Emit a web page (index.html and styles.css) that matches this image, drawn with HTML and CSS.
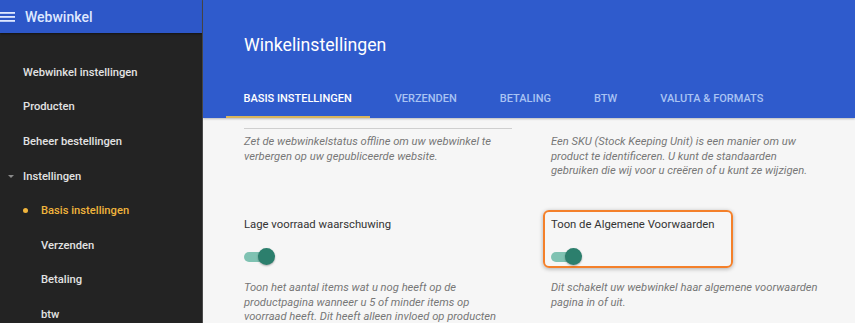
FILE: index.html
```html
<!DOCTYPE html>
<html lang="nl">
<head>
<meta charset="utf-8">
<title>Winkelinstellingen</title>
<link rel="stylesheet" href="styles.css">
</head>
<body>
<div class="app">
  <aside class="sidebar">
    <div class="side-head">
      <svg class="burger" width="15" height="12" viewBox="0 0 15 12"><rect x="0" y="1" width="15" height="1.8" fill="#dfe8ff"/><rect x="0" y="5" width="15" height="1.8" fill="#dfe8ff"/><rect x="0" y="9" width="15" height="1.8" fill="#dfe8ff"/></svg>
      <span class="brand">Webwinkel</span>
    </div>
    <nav class="nav">
      <div class="nav-item">Webwinkel instellingen</div>
      <div class="nav-item">Producten</div>
      <div class="nav-item">Beheer bestellingen</div>
      <div class="nav-item parent"><span class="caret"></span>Instellingen</div>
      <div class="nav-item sub active"><span class="dot"></span>Basis instellingen</div>
      <div class="nav-item sub">Verzenden</div>
      <div class="nav-item sub">Betaling</div>
      <div class="nav-item sub">btw</div>
    </nav>
  </aside>
  <main class="main">
    <header class="head">
      <h1 class="title">Winkelinstellingen</h1>
      <div class="tabs">
        <div class="tab active">BASIS INSTELLINGEN</div>
        <div class="tab">VERZENDEN</div>
        <div class="tab">BETALING</div>
        <div class="tab">BTW</div>
        <div class="tab">VALUTA &amp; FORMATS</div>
      </div>
    </header>
    <section class="content">
      <div class="col">
        <div class="divider"></div>
        <p class="desc">Zet de webwinkelstatus offline om uw webwinkel te verbergen op uw gepubliceerde website.</p>
      </div>
      <div class="col">
        <div class="divider none"></div>
        <p class="desc">Een SKU (Stock Keeping Unit) is een manier om uw product te identificeren. U kunt de standaarden gebruiken die wij voor u creëren of u kunt ze wijzigen.</p>
      </div>
      <div class="col">
        <div class="field">
          <div class="label">Lage voorraad waarschuwing</div>
          <div class="toggle"><span class="track"></span><span class="thumb"></span></div>
        </div>
        <p class="desc">Toon het aantal items wat u nog heeft op de productpagina wanneer u 5 of minder items op voorraad heeft. Dit heeft alleen invloed op producten</p>
      </div>
      <div class="col">
        <div class="field highlight">
          <div class="label">Toon de Algemene Voorwaarden</div>
          <div class="toggle"><span class="track"></span><span class="thumb"></span></div>
        </div>
        <p class="desc">Dit schakelt uw webwinkel haar algemene voorwaarden pagina in of uit.</p>
      </div>
    </section>
  </main>
</div>
</body>
</html>
```
FILE: styles.css
```css
* { box-sizing: border-box; }
html, body { margin: 0; padding: 0; }
body {
  font-family: Roboto, "Noto Sans", "Liberation Sans", sans-serif;
  background: #f6f6f6;
  width: 855px;
  height: 323px;
  overflow: hidden;
}
.app { display: flex; height: 323px; overflow: hidden; }
.sidebar {
  width: 203px;
  flex: none;
  background: #232323;
  border-right: 1px solid #4a4a4a;
  display: flex;
  flex-direction: column;
  overflow: hidden;
}
.side-head {
  flex: none;
  height: 33px;
  background: #2d57c8;
  display: flex;
  align-items: center;
  box-shadow: 0 1px 2px rgba(0,0,0,0.5);
}
.burger { margin-left: 0; margin-right: 10px; }
.brand {
  color: #dfe8ff;
  font-size: 14px;
  font-weight: 500;
}
.nav { flex: none; padding-top: 22px; }
.nav-item {
  height: 34.6px;
  display: flex;
  align-items: center;
  padding-left: 23px;
  color: #e2e2e2;
  font-size: 11.2px;
  font-weight: 500;
  position: relative;
}
.nav-item.sub { padding-left: 41px; }
.nav-item.active { color: #f0b43c; }
.caret {
  position: absolute;
  left: 8px;
  top: 16px;
  width: 0; height: 0;
  border-left: 3px solid transparent;
  border-right: 3px solid transparent;
  border-top: 3px solid #8a8a8a;
}
.dot {
  position: absolute;
  left: 23px;
  top: 15px;
  width: 5px; height: 5px;
  border-radius: 50%;
  background: #f0b43c;
}
.main { flex: 1; display: flex; flex-direction: column; min-width: 0; }
.head {
  flex: none;
  background: #2f5bcc;
  height: 118px;
  display: flex;
  flex-direction: column;
  box-shadow: 0 1px 2px rgba(0,0,0,0.25);
}
.title {
  margin: 0;
  padding: 34px 0 0 41px;
  height: 80px;
  color: #fff;
  font-size: 17.7px;
  font-weight: 400;
  line-height: 22px;
}
.tabs {
  display: flex;
  padding-left: 19px;
  height: 38px;
}
.tab {
  padding: 0 21.5px;
  display: flex;
  align-items: center;
  color: #a9c3f3;
  font-size: 11px;
  font-weight: 500;
  position: relative;
  padding-bottom: 2px;
}
.tab.active { color: #fff; }
.tab.active::after {
  content: "";
  position: absolute;
  left: 4px; right: 3px; bottom: 0;
  height: 2px;
  background: #d9b55c;
}
.content {
  flex: none;
  display: grid;
  grid-template-columns: 268px 295px;
  column-gap: 39px;
  padding-left: 41px;
  padding-top: 10px;
}
.divider { height: 1px; background: #cfcfcf; margin-bottom: 6px; }
.divider.none { background: transparent; }
.desc {
  margin: 0;
  font-size: 11.2px;
  font-style: italic;
  color: #777;
  line-height: 14.7px;
}
.col:nth-child(2) .desc { width: 260px; }
.col:nth-child(1) .desc, .col:nth-child(2) .desc { height: 76px; }
.field {
  height: 58px;
  padding-top: 7px;
  margin-bottom: 12px;
}
.field.highlight {
  margin-left: -8px;
  margin-top: -1px;
  margin-bottom: 13px;
  padding-left: 6px;
  padding-top: 6px;
  width: 190px;
  border: 2px solid #f4802a;
  border-radius: 6px;
  box-shadow: 0 1px 4px rgba(0,0,0,0.3);
}
.label {
  font-size: 11.3px;
  color: #333;
  line-height: 14px;
}
.toggle {
  position: relative;
  width: 32px;
  height: 18px;
  margin-top: 16px;
}
.track {
  position: absolute;
  left: 0; top: 4px;
  width: 28px; height: 10px;
  border-radius: 5px;
  background: #7fc2b2;
}
.thumb {
  position: absolute;
  left: 14px; top: 0;
  width: 17px; height: 17px;
  border-radius: 50%;
  background: #2c7f6d;
  box-shadow: 0 1px 2px rgba(0,0,0,0.3);
}
```
